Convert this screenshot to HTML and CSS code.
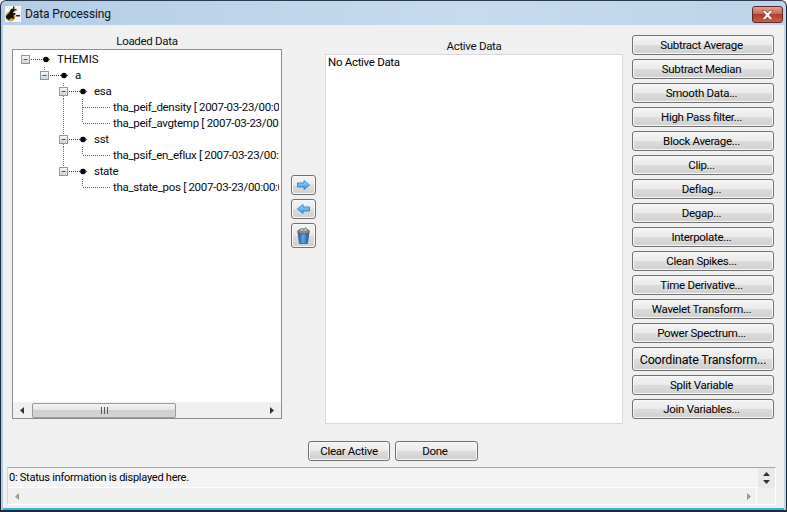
FILE: index.html
```html
<!DOCTYPE html>
<html>
<head>
<meta charset="utf-8">
<title>Data Processing</title>
<link rel="stylesheet" href="styles.css">
</head>
<body>
<div class="window">
  <svg class="defs" width="0" height="0">
    <defs>
      <linearGradient id="box" x1="0" y1="0" x2="0" y2="1"><stop offset="0" stop-color="#f8f8f8"/><stop offset="1" stop-color="#c9d2da"/></linearGradient>
      <linearGradient id="blue" x1="0" y1="0" x2="0" y2="1"><stop offset="0" stop-color="#b4e0fa"/><stop offset=".5" stop-color="#6db8ee"/><stop offset="1" stop-color="#2f86dc"/></linearGradient>
      <linearGradient id="bin" x1="0" y1="0" x2="1" y2="0"><stop offset="0" stop-color="#1c5a96"/><stop offset=".45" stop-color="#5fa6e0"/><stop offset="1" stop-color="#1a5690"/></linearGradient>
    </defs>
  </svg>
  <header class="titlebar">
    <svg class="app-icon" width="16" height="16" viewBox="0 0 16 16">
      <rect width="16" height="16" fill="#f7f6f0"/>
      <ellipse cx="5.500" cy="10.500" rx="5" ry="5" fill="#c9a04c"/>
      <path d="M1 10 L4 7 L6 3 L8 2.500 L8 7 L10.500 7 L10.500 8.500 L8.500 9 L9 13 L6 12 L4 14 L1 12 Z" fill="#14100b"/>
      <path d="M8 .5 H9.500 V3 H11.500 V4.500 H9.500 V6 H8 Z M11 9 H15 V10.500 H11 Z" fill="#2a2520"/>
    </svg>
    <span class="title">Data Processing</span>
    <button class="close" aria-label="Close">
      <svg width="13" height="10" viewBox="0 0 13 10"><path d="M1 .5 L4 .5 L6.500 3 L9 .5 L12 .5 L8.300 5 L12 9.500 L9 9.500 L6.500 7 L4 9.500 L1 9.500 L4.700 5 Z" fill="#fff" stroke="#7a3a34" stroke-width=".6"/></svg>
    </button>
  </header>
  <main class="client">
    <div class="columns">
      <section class="col col-loaded">
        <div class="col-label">Loaded Data</div>
        <div class="panel panel-loaded">
          <div class="tree">
            <div class="row"><svg class="guide" width="44" height="16" viewBox="0 0 44 16"><rect x="8.500" y="4.500" width="8" height="8" fill="url(#box)" stroke="#8a97a5"/><path d="M10.500 8.500H14.500" stroke="#4a5a6c"/><path d="M18 8.500H29" stroke="#333" stroke-dasharray="1 1"/><circle cx="33" cy="8.500" r="2.800" fill="#000"/><path d="M36 8.500H38" stroke="#333" stroke-dasharray="1 1"/></svg><span class="root-label">THEMIS</span></div>
            <div class="row"><svg class="guide" width="62" height="16" viewBox="0 0 62 16"><path d="M31.500 0V4" stroke="#777" stroke-dasharray="1 1"/><rect x="27.500" y="4.500" width="8" height="8" fill="url(#box)" stroke="#8a97a5"/><path d="M29.500 8.500H33.500" stroke="#4a5a6c"/><path d="M37 8.500H48" stroke="#333" stroke-dasharray="1 1"/><circle cx="51" cy="8.500" r="2.800" fill="#000"/><path d="M54 8.500H56" stroke="#333" stroke-dasharray="1 1"/></svg><span>a</span></div>
            <div class="row"><svg class="guide" width="81" height="16" viewBox="0 0 81 16"><path d="M50.500 0V4M50.500 13V16" stroke="#777" stroke-dasharray="1 1"/><rect x="46.500" y="4.500" width="8" height="8" fill="url(#box)" stroke="#8a97a5"/><path d="M48.500 8.500H52.500" stroke="#4a5a6c"/><path d="M56 8.500H67" stroke="#333" stroke-dasharray="1 1"/><circle cx="70" cy="8.500" r="2.800" fill="#000"/><path d="M73 8.500H75" stroke="#333" stroke-dasharray="1 1"/></svg><span>esa</span></div>
            <div class="row"><svg class="guide" width="100" height="16" viewBox="0 0 100 16"><path d="M50.500 0V16M69.500 0V16M70 8.500H97" stroke="#666" stroke-dasharray="1 1"/></svg><span>tha_peif_density [ 2007-03-23/00:00:00-2007-03-24/00:00:00 ]</span></div>
            <div class="row"><svg class="guide" width="100" height="16" viewBox="0 0 100 16"><path d="M50.500 0V16M69.500 0V8M70 8.500H97" stroke="#666" stroke-dasharray="1 1"/></svg><span>tha_peif_avgtemp [ 2007-03-23/00:00:00-2007-03-24/00:00:00 ]</span></div>
            <div class="row"><svg class="guide" width="81" height="16" viewBox="0 0 81 16"><path d="M50.500 0V4M50.500 13V16" stroke="#777" stroke-dasharray="1 1"/><rect x="46.500" y="4.500" width="8" height="8" fill="url(#box)" stroke="#8a97a5"/><path d="M48.500 8.500H52.500" stroke="#4a5a6c"/><path d="M56 8.500H67" stroke="#333" stroke-dasharray="1 1"/><circle cx="70" cy="8.500" r="2.800" fill="#000"/><path d="M73 8.500H75" stroke="#333" stroke-dasharray="1 1"/></svg><span>sst</span></div>
            <div class="row"><svg class="guide" width="100" height="16" viewBox="0 0 100 16"><path d="M50.500 0V16M69.500 0V8M70 8.500H97" stroke="#666" stroke-dasharray="1 1"/></svg><span>tha_psif_en_eflux [ 2007-03-23/00:00:00-2007-03-24/00:00:00 ]</span></div>
            <div class="row"><svg class="guide" width="81" height="16" viewBox="0 0 81 16"><path d="M50.500 0V4" stroke="#777" stroke-dasharray="1 1"/><rect x="46.500" y="4.500" width="8" height="8" fill="url(#box)" stroke="#8a97a5"/><path d="M48.500 8.500H52.500" stroke="#4a5a6c"/><path d="M56 8.500H67" stroke="#333" stroke-dasharray="1 1"/><circle cx="70" cy="8.500" r="2.800" fill="#000"/><path d="M73 8.500H75" stroke="#333" stroke-dasharray="1 1"/></svg><span>state</span></div>
            <div class="row"><svg class="guide" width="100" height="16" viewBox="0 0 100 16"><path d="M69.500 0V8M70 8.500H97" stroke="#666" stroke-dasharray="1 1"/></svg><span>tha_state_pos [ 2007-03-23/00:00:00-2007-03-24/00:00:00 ]</span></div>
          </div>
          <div class="hscroll">
            <svg class="tri" width="5" height="7" viewBox="0 0 5 7"><path d="M4 0V7L0 3.500Z" fill="#333"/></svg>
            <div class="thumb"><svg width="7" height="7" viewBox="0 0 7 7"><path d="M.5 0V7M3.500 0V7M6.500 0V7" stroke="#555"/></svg></div>
            <svg class="tri tri-right" width="5" height="7" viewBox="0 0 5 7"><path d="M1 0V7L5 3.500Z" fill="#333"/></svg>
          </div>
        </div>
      </section>
      <div class="movers">
        <button class="btn mover"><svg width="13" height="10" viewBox="0 0 13 10"><path d="M.5 3H7V.5L12.500 5L7 9.500V7H.5Z" fill="url(#blue)" stroke="#3f88c8"/></svg></button>
        <button class="btn mover"><svg width="13" height="10" viewBox="0 0 13 10"><path d="M12.500 3H6V.5L.5 5L6 9.500V7H12.500Z" fill="url(#blue)" stroke="#3f88c8"/></svg></button>
        <button class="btn mover mover-trash"><svg width="13" height="17" viewBox="0 0 13 17"><path d="M1 5L2.500 16.500H10.500L12 5Z" fill="url(#bin)" stroke="#27527c" stroke-width=".7"/><ellipse cx="6.500" cy="4.500" rx="6" ry="2.500" fill="#8a8a8a" stroke="#555" stroke-width=".7"/><path d="M2.500 3.500L4.500 1L6.500 3L8.500 .5L10.500 3.500" fill="#d8d8d8" stroke="#666" stroke-width=".8"/></svg></button>
      </div>
      <section class="col col-active">
        <div class="col-label">Active Data</div>
        <div class="panel panel-active">No Active Data</div>
      </section>
      <nav class="actions">
        <button class="btn">Subtract Average</button>
        <button class="btn">Subtract Median</button>
        <button class="btn">Smooth Data...</button>
        <button class="btn">High Pass filter...</button>
        <button class="btn">Block Average...</button>
        <button class="btn">Clip...</button>
        <button class="btn">Deflag...</button>
        <button class="btn">Degap...</button>
        <button class="btn">Interpolate...</button>
        <button class="btn">Clean Spikes...</button>
        <button class="btn">Time Derivative...</button>
        <button class="btn">Wavelet Transform...</button>
        <button class="btn">Power Spectrum...</button>
        <button class="btn btn-large">Coordinate Transform...</button>
        <button class="btn">Split Variable</button>
        <button class="btn">Join Variables...</button>
      </nav>
    </div>
    <div class="footer-buttons">
      <button class="btn btn-clear">Clear Active</button>
      <button class="btn btn-done">Done</button>
    </div>
    <div class="status">
      <div class="status-main">
        <div class="status-text">0: Status information is displayed here.</div>
        <div class="status-scroll">
          <svg width="4" height="7" viewBox="0 0 4 7"><path d="M4 0V7L0 3.500Z" fill="#999"/></svg>
          <svg width="4" height="7" viewBox="0 0 4 7"><path d="M0 0V7L4 3.500Z" fill="#999"/></svg>
        </div>
      </div>
      <div class="status-spin">
        <svg width="7" height="4" viewBox="0 0 7 4"><path d="M0 4H7L3.500 0Z" fill="#333"/></svg>
        <svg width="7" height="4" viewBox="0 0 7 4"><path d="M0 0H7L3.500 4Z" fill="#333"/></svg>
      </div>
    </div>
  </main>
</div>
</body>
</html>
```
FILE: styles.css
```css
* { box-sizing: border-box; }
html, body { margin: 0; padding: 0; }
body { width: 787px; height: 512px; overflow: hidden; font-family: Roboto, "Liberation Sans", sans-serif; font-size: 11.5px; letter-spacing: -.3px; color: #000; }
.defs { display: block; height: 0; }
.window {
  width: 787px; height: 512px; display: flex; flex-direction: column;
  background: linear-gradient(90deg, #b4cde6, #c6dbee 60%, #bcd3e9);
  border: 1px solid #1d2a38; border-top-color: #2b3a4a; border-bottom-width: 2px; border-radius: 6px 6px 0 0;
  padding: 0 2px;
}
.titlebar { height: 24px; flex: none; display: flex; align-items: center; padding: 2px 0 0 2px; }
.app-icon { flex: none; }
.title { margin-left: 4px; font-size: 12px; letter-spacing: -.1px; color: #111; }
.close {
  margin-left: auto; margin-right: 1px; margin-top: 1px; width: 31px; height: 17px; padding: 0; display: flex; align-items: center; justify-content: center;
  border: 1px solid #5c2a28; border-radius: 3px;
  background: linear-gradient(#dfa096, #c9685a 45%, #b23a2c 50%, #c8604f);
}
.client { flex: 1; min-height: 0; background: #f0f0f0; display: flex; flex-direction: column; border-bottom: 2px solid #39b6d6; }
.columns { display: flex; padding: 9px 0 0 9px; height: 399px; flex: none; }
.col { display: flex; flex-direction: column; flex: none; }
.col-loaded { width: 270px; }
.col-active { width: 298px; margin-left: 9px; padding-top: 5px; }
.col-label { height: 15px; line-height: 14px; text-align: center; color: #111; }
.panel { height: 370px; background: #fff; flex: none; }
.panel-loaded { border: 1px solid #8d8d8d; display: flex; flex-direction: column; }
.panel-active { border: 1px solid #d9d9d9; padding: 0 2px; line-height: 14px; }
.tree { flex: 1; min-height: 0; overflow: hidden; padding-top: 1px; margin-right: 2px; }
.row { height: 16px; display: flex; align-items: center; white-space: nowrap; color: #0a0a14; }
.root-label { letter-spacing: 0; }
.guide { flex: none; }
.hscroll { height: 16px; flex: none; display: flex; align-items: center; background: #f0f0f0; padding: 0 7px 0 7px; }
.tri { flex: none; }
.tri-right { margin-left: auto; }
.thumb {
  margin-left: 7px; width: 144px; height: 15px; display: flex; align-items: center; justify-content: center;
  border: 1px solid #9a9a9a; border-radius: 2px; background: linear-gradient(#f4f4f4, #e4e4e4 50%, #cfcfcf 50%, #d4d4d4);
}
.movers { width: 25px; margin-left: 9px; flex: none; display: flex; flex-direction: column; gap: 4px; padding-top: 141px; }
.actions { width: 142px; margin-left: 9px; flex: none; display: flex; flex-direction: column; gap: 4px; padding-top: 1px; }
.btn {
  height: 20px; padding: 0 3px 0 0; flex: none; font: inherit; letter-spacing: inherit; color: #000; text-align: center;
  border: 1px solid #707070; border-radius: 3px;
  background: linear-gradient(#f3f3f3, #ebebeb 48%, #dcdcdc 52%, #cfcfcf);
  box-shadow: inset 0 0 0 1px #f8f8f8;
}
.btn-large { height: 24px; padding: 0; font-size: 12.5px; letter-spacing: -.22px; }
.mover { display: flex; align-items: center; justify-content: center; width: 25px; padding: 0; }
.mover-trash { height: 25px; }
.footer-buttons { display: flex; justify-content: center; gap: 5px; padding-right: 1px; margin-top: 17px; flex: none; }
.btn-clear { width: 82px; padding: 0; }
.btn-done { width: 83px; }
.status { margin: 6px 8px 0 4px; height: 38px; flex: none; display: flex; border-top: 1px solid #a6a6a6; border-left: 1px solid #d4d4d4; border-right: 1px solid #fff; border-bottom: 1px solid #fff; }
.status-main { flex: 1; min-width: 0; display: flex; flex-direction: column; background: #f0f0f0; }
.status-text { height: 20px; line-height: 19px; padding-left: 1px; font-size: 11px; letter-spacing: -.25px; background: #f4f4f4; border-bottom: 1px solid #fff; }
.status-scroll { flex: 1; display: flex; align-items: center; justify-content: space-between; padding: 0 5px 0 7px; margin-right: 1px; border-right: 1px solid #fff; }
.status-spin { width: 17px; height: 20px; flex: none; display: flex; flex-direction: column; align-items: center; justify-content: center; gap: 4px; background: #e9e9e9; }
```
